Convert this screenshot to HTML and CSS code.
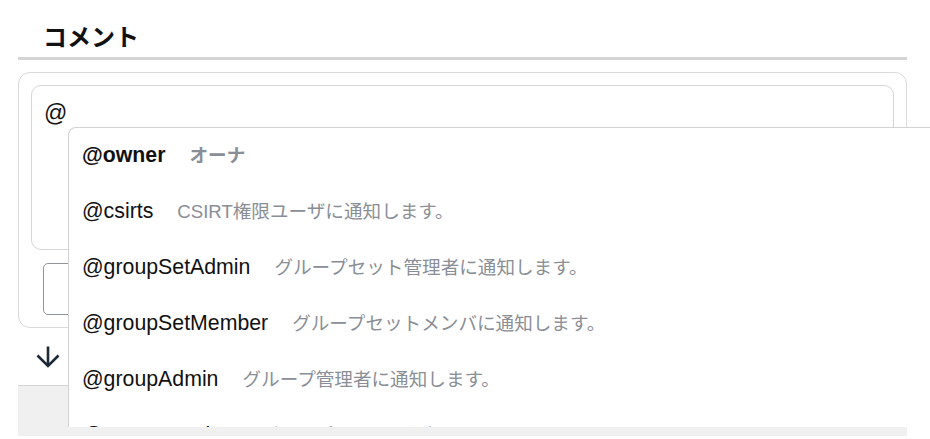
FILE: index.html
```html
<!DOCTYPE html>
<html lang="ja">
<head>
<meta charset="utf-8">
<title>コメント</title>
<link rel="stylesheet" href="styles.css">
</head>
<body>
<div class="page">
  <h2 class="section-title">コメント</h2>
  <div class="comment-box">
    <div class="editor">@</div>
    <div class="actions">
      <button class="btn" type="button"></button>
    </div>
  </div>
  <div class="scroll-row">
    <svg class="arrow" width="24" height="22" viewBox="0 0 24 22" aria-hidden="true">
      <path d="M12 0.5 V20" stroke="#1b2835" stroke-width="2.6" fill="none"/>
      <path d="M1.5 9.5 L12 20 L22.5 9.5" stroke="#1b2835" stroke-width="2.6" fill="none" stroke-linejoin="miter"/>
    </svg>
  </div>
  <div class="footer-area"></div>

  <ul class="mention-menu">
    <li class="item active"><span class="key">@owner</span><span class="desc">オーナ</span></li>
    <li class="item"><span class="key">@csirts</span><span class="desc">CSIRT権限ユーザに通知します。</span></li>
    <li class="item"><span class="key">@groupSetAdmin</span><span class="desc">グループセット管理者に通知します。</span></li>
    <li class="item"><span class="key">@groupSetMember</span><span class="desc">グループセットメンバに通知します。</span></li>
    <li class="item"><span class="key">@groupAdmin</span><span class="desc">グループ管理者に通知します。</span></li>
    <li class="item"><span class="key">@groupMember</span><span class="desc">グループメンバに通知します。</span></li>
  </ul>
</div>
</body>
</html>
```

FILE: styles.css
```css
html, body {
  margin: 0;
  padding: 0;
  overflow: hidden;
  background: #ffffff;
  font-family: "Liberation Sans", "Noto Sans CJK JP", sans-serif;
  color: #111111;
}

.page {
  position: relative;
  margin: 0 23px 0 18px;
}

.section-title {
  margin: 0;
  padding: 19px 0 4px 25px;
  font-family: "Noto Sans CJK JP", "Liberation Sans", sans-serif;
  font-size: 24px;
  line-height: 34px;
  font-weight: 700;
  color: #111111;
  border-bottom: 3px solid #d4d4d4;
}

.comment-box {
  margin-top: 12px;
  border: 1px solid #dadada;
  border-radius: 12px;
  padding: 12px;
}

.editor {
  height: 139px;
  border: 1px solid #d6d6d6;
  border-radius: 10px;
  padding: 12px;
  font-size: 23px;
  line-height: 31px;
  color: #111111;
}

.actions {
  margin-top: 13px;
  padding-left: 12px;
  display: flex;
}

.btn {
  width: 160px;
  height: 52px;
  border: 1px solid #8f959b;
  border-radius: 5px;
  background: #ffffff;
}

.scroll-row {
  height: 57px;
  display: flex;
  align-items: center;
  padding-left: 18px;
}

.arrow {
  display: block;
  margin-top: 1px;
}

.footer-area {
  height: 50px;
  background: #f0f0f0;
  border-top: 1px solid #d3d3d3;
}

.mention-menu {
  position: absolute;
  top: 127px;
  left: 50px;
  width: 900px;
  height: 299px;
  margin: 0;
  padding: 0;
  list-style: none;
  background: #ffffff;
  border-top: 1px solid #d2d2d2;
  border-left: 1px solid #d2d2d2;
  border-top-left-radius: 8px;
  overflow: hidden;
}

.item {
  height: 56px;
  box-sizing: border-box;
  display: flex;
  align-items: baseline;
  padding: 15px 13px 0;
  white-space: nowrap;
}

.key {
  font-size: 21.3px;
  line-height: 24px;
  color: #111111;
}

.desc {
  margin-left: 24px;
  font-size: 18.6px;
  line-height: 24px;
  color: #8a8e96;
}

.item.active .key,
.item.active .desc {
  font-weight: 700;
}
```
